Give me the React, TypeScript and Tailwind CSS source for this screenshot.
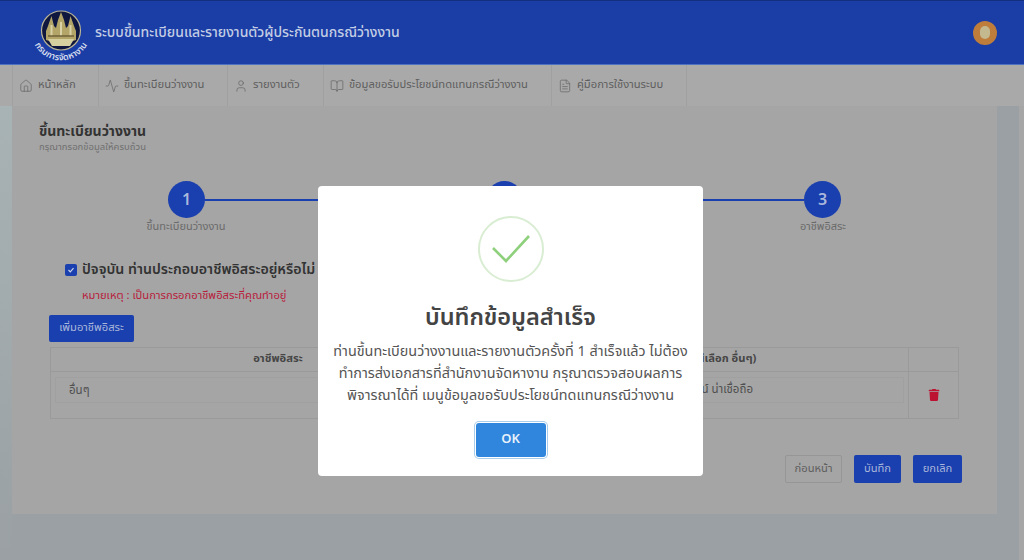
import { Home, Activity, User, BookOpen, FileText } from 'lucide-react';
import { FaTrash } from 'react-icons/fa';

const menu = [
    { label: 'หน้าหลัก', icon: Home, width: 'w-[86px]' },
    { label: 'ขึ้นทะเบียนว่างงาน', icon: Activity, width: 'w-[129px]' },
    { label: 'รายงานตัว', icon: User, width: 'w-[96px]' },
    { label: 'ข้อมูลขอรับประโยชน์ทดแทนกรณีว่างงาน', icon: BookOpen, width: 'w-[228px]' },
    { label: 'คู่มือการใช้งานระบบ', icon: FileText, width: 'w-[136px]' },
];

const Logo = () => (
    <svg width="56" height="60" viewBox="0 0 56 60" className="shrink-0 overflow-visible">
        <circle cx="28" cy="27.5" r="19.5" fill="#10173f" stroke="#b9b596" strokeWidth="1.2" />
        <path d="M13 37 L13 28 L15 23 L18.5 13 L21 23 L23 25 L25 17 L28 9 L31 17 L33 25 L35 23 L37.5 13 L41 23 L43 28 L43 37 Q28 43 13 37 Z" fill="#b3a468" />
        <path d="M15 36 L41 36 L37 43 L19 43 Z" fill="#d6cfa0" />
        <path d="M18.5 22 L18.5 33 M28 19 L28 33 M37.5 22 L37.5 33" stroke="#d9d2a6" strokeWidth="2" fill="none" />
        <path d="M15 33 L41 33" stroke="#6f6238" strokeWidth="1.5" fill="none" />
        <path id="logo-arc" d="M-0.5 18 A30 30 0 1 0 56.5 18" fill="none" />
        <text fontSize="9" fontWeight="600" fill="#d4dbec" textAnchor="middle">
            <textPath href="#logo-arc" startOffset="50%">กรมการจัดหางาน</textPath>
        </text>
    </svg>
);

const App = () => {
    return <div className="relative w-[1024px] h-[560px] overflow-hidden bg-[#9aa0a3] text-[#5c5c5c] font-['Noto_Sans_Thai','Noto_Sans',sans-serif]">
        <header className="h-[65px] flex items-center pl-[33px] pr-[27px] bg-[#1a3da6] border-t border-t-[#152f80] border-b border-b-[#4f72c0]">
            <Logo />
            <h1 className="ml-[6px] text-[14px] font-medium text-[#c3cde4]">ระบบขึ้นทะเบียนและรายงานตัวผู้ประกันตนกรณีว่างงาน</h1>
            <div className="ml-auto w-6 h-6 rounded-full bg-[#bf7d3c] flex items-center justify-center">
                <div className="w-[10px] h-[13px] rounded-full bg-[#c4b88f]" />
            </div>
        </header>

        <nav className="h-[41px] flex pl-[12px] bg-[#a9a9a9]">
            {menu.map((item) => (
                <div key={item.label} className={`${item.width} flex items-center gap-[5px] pl-[6px] border-l border-[#a0a0a0] last:border-r text-[11.2px] text-[#5e5e5e]`}>
                    <item.icon size={14} strokeWidth={1.25} className="text-[#666666] shrink-0" />
                    <span>{item.label}</span>
                </div>
            ))}
        </nav>

        <div className="flex h-[454px]">
            <div className="w-[12px] bg-gradient-to-b from-[#a8b3b5] to-[#9aa0a3]" />
            <main className="w-[985px] h-[408px] bg-[#a5a5a5] pt-[18px] pl-[27px]">
                <h2 className="text-[14px] font-bold leading-[16px] text-[#333333]">ขึ้นทะเบียนว่างงาน</h2>
                <p className="text-[9.5px] leading-[12px] mt-[1px] text-[#707070]">กรุณากรอกข้อมูลให้ครบถ้วน</p>

                <div className="flex items-center ml-[129px] w-[673px] mt-[28px]">
                    <div className="w-[37px] h-[37px] rounded-full bg-[#1a3fae] flex items-center justify-center text-[16px] font-semibold text-[#aab8dc]">1</div>
                    <div className="flex-1 h-[2px] bg-[#1a3fae]" />
                    <div className="w-[37px] h-[37px] rounded-full bg-[#1a3fae] flex items-center justify-center text-[16px] font-semibold text-[#aab8dc]">2</div>
                    <div className="flex-1 h-[2px] bg-[#1a3fae]" />
                    <div className="w-[37px] h-[37px] rounded-full bg-[#1a3fae] flex items-center justify-center text-[16px] font-semibold text-[#aab8dc]">3</div>
                </div>
                <div className="flex ml-[87px] w-[757px] justify-between mt-[1px] text-[11px] leading-[16px] text-[#6b6b6b]">
                    <span className="w-[120px] text-center">ขึ้นทะเบียนว่างงาน</span>
                    <span className="w-[120px] text-center">รายงานตัว</span>
                    <span className="w-[120px] text-center">อาชีพอิสระ</span>
                </div>

                <label className="flex items-center gap-[5px] ml-[26px] mt-[25px]">
                    <span className="w-3 h-3 rounded-[2px] bg-[#1a3fae] flex items-center justify-center">
                        <svg width="8" height="8" viewBox="0 0 8 8"><path d="M1.5 4 L3.3 5.8 L6.5 2.2" stroke="#c9d3ea" strokeWidth="1.2" fill="none" /></svg>
                    </span>
                    <span className="text-[14.2px] font-semibold leading-[20px] text-[#333333]">ปัจจุบัน ท่านประกอบอาชีพอิสระอยู่หรือไม่</span>
                </label>
                <p className="ml-[43px] mt-[8px] text-[11.2px] leading-[16px] text-[#b81c3c]">หมายเหตุ : เป็นการกรอกอาชีพอิสระที่คุณทำอยู่</p>

                <button className="block ml-[10px] mt-[11px] w-[85px] h-[27px] rounded-[2px] bg-[#1a3fae] text-[11.2px] text-[#a9b7da]">เพิ่มอาชีพอิสระ</button>

                <table className="ml-[11px] mt-[5px] w-[909px] table-fixed border-collapse border border-[#9a9a9a] text-[11.2px]">
                    <thead>
                        <tr className="h-[24px]">
                            <th className="w-[455px] border border-[#9a9a9a] font-bold text-[#454545]">อาชีพอิสระ</th>
                            <th className="w-[403px] border border-[#9a9a9a] font-bold text-[#454545]">ระบุ (กรณีเลือก อื่นๆ)</th>
                            <th className="border border-[#9a9a9a]"></th>
                        </tr>
                    </thead>
                    <tbody>
                        <tr className="h-[47px]">
                            <td className="border border-[#9a9a9a] pl-[4px] pr-[4px] pt-[5px] pb-[15px] align-top">
                                <div className="h-[26px] flex items-center pl-[13px] pt-[2px] border border-[#a0a0a0] text-[11.5px] text-[#4f4f4f]">อื่นๆ</div>
                            </td>
                            <td className="border border-[#9a9a9a] pl-[4px] pr-[4px] pt-[5px] pb-[15px] align-top">
                                <div className="h-[26px] flex items-center justify-end pr-[150px] border border-[#a0a0a0] text-[11.5px] text-[#4f4f4f]">ขายของออนไลน์ น่าเชื่อถือ</div>
                            </td>
                            <td className="border border-[#9a9a9a]">
                                <FaTrash size={12} className="mx-auto text-[#bd1333]" />
                            </td>
                        </tr>
                    </tbody>
                </table>

                <div className="flex justify-end gap-[12px] w-[923px] mt-[36px] text-[11.2px]">
                    <button className="w-[57px] h-[28px] rounded-[2px] border border-[#969696] text-[#5e5e5e]">ก่อนหน้า</button>
                    <button className="w-[47px] h-[28px] rounded-[2px] bg-[#1a3fae] text-[#a9b7da]">บันทึก</button>
                    <button className="w-[49px] h-[28px] rounded-[2px] bg-[#1a3fae] text-[#a9b7da]">ยกเลิก</button>
                </div>
            </main>
            <div className="flex-1" />
            <div className="w-[5px] bg-[#a6a6a6]" />
        </div>

        <div className="absolute inset-0 flex justify-center pt-[186px] pr-[3px]">
            <div className="w-[385px] h-[290px] rounded-[4px] bg-white flex flex-col items-center pt-[30px]">
                <div className="w-[66px] h-[66px] rounded-full border-[2px] border-[#d9edd3] flex items-center justify-center">
                    <svg width="40" height="30" viewBox="0 0 40 30"><path d="M2 14 L15 27 L38 2" stroke="#8fd07d" strokeWidth="2.6" fill="none" /></svg>
                </div>
                <h3 className="mt-[20px] text-[23.5px] font-semibold leading-[32px] text-[#444444]">บันทึกข้อมูลสำเร็จ</h3>
                <p className="mt-[7px] w-[380px] text-center text-[14.4px] leading-[22px] text-[#555555]">
                    ท่านขึ้นทะเบียนว่างงานและรายงานตัวครั้งที่ 1 สำเร็จแล้ว ไม่ต้อง<br />
                    ทำการส่งเอกสารที่สำนักงานจัดหางาน กรุณาตรวจสอบผลการ<br />
                    พิจารณาได้ที่ เมนูข้อมูลขอรับประโยชน์ทดแทนกรณีว่างงาน
                </p>
                <button className="mt-[16px] w-[70px] h-[34px] rounded-[3px] bg-[#2f86dc] text-[13px] font-semibold text-[#e8f1fb] ring-1 ring-offset-1 ring-[#a9cdec]">OK</button>
            </div>
        </div>
    </div>
};

export default App;
